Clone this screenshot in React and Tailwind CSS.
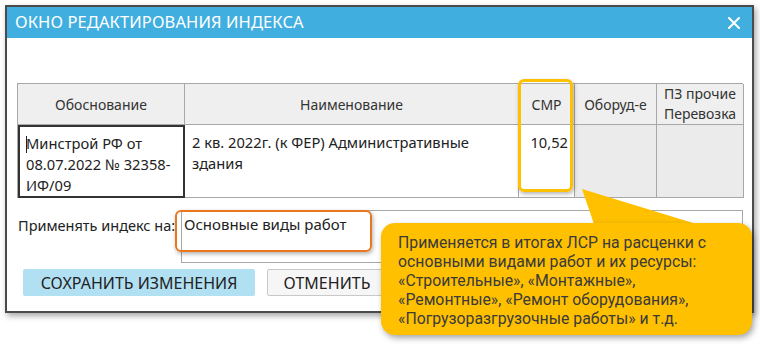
import React from 'react'

const cellFont = { fontFamily: '"Noto Sans", "Open Sans", sans-serif' }

function HeaderCell({ children, className = '' }) {
    return (
        <div className={`flex items-center justify-center border-r border-b border-[#a8a8a8] bg-[#efefef] text-center text-[14px] leading-[19px] text-[#333] ${className}`}>
            {children}
        </div>
    )
}

function App() {
    return (
        <div className="relative h-[348px] w-[760px] overflow-hidden bg-white" style={cellFont}>
            {/* dialog window */}
            <div className="ml-[5px] mt-[5px] flex h-[308px] w-[749px] flex-col border-2 border-[#4b4b4b] bg-white shadow-[2px_3px_6px_rgba(0,0,0,0.35)]">
                <div className="flex h-[31px] items-center justify-between bg-[#41aee0] pl-[8px] pr-[12px] text-white">
                    <span className="text-[16.5px] tracking-[0.1px]">ОКНО РЕДАКТИРОВАНИЯ ИНДЕКСА</span>
                    <svg width="12" height="12" viewBox="0 0 12 12" className="mt-[1px]">
                        <path d="M1 1L11 11M11 1L1 11" stroke="white" strokeWidth="2" strokeLinecap="round" />
                    </svg>
                </div>

                <div className="flex flex-col pl-[10px] pt-[45px]">
                    {/* table */}
                    <div className="grid w-[726px] grid-cols-[167px_334px_56px_82px_87px] grid-rows-[41px_73px] border-l border-t border-[#a8a8a8]">
                        <HeaderCell>Обоснование</HeaderCell>
                        <HeaderCell>Наименование</HeaderCell>
                        <HeaderCell>СМР</HeaderCell>
                        <HeaderCell>Оборуд-е</HeaderCell>
                        <HeaderCell className="leading-[20px]">
                            <span>ПЗ прочие<br />Перевозка</span>
                        </HeaderCell>

                        <div className="relative border-2 border-[#333] bg-white pl-[6px] pt-[6px] text-[14.7px] leading-[21px] text-[#222]">
                            <span className="absolute left-[6px] top-[9px] h-[17px] w-px bg-[#222]" />
                            Минстрой РФ от<br />08.07.2022 № 32358-<br />ИФ/09
                        </div>
                        <div className="border-r border-b border-[#a8a8a8] bg-white pl-[7px] pt-[7px] text-[14.7px] leading-[21px] text-[#222]">
                            2 кв. 2022г. (к ФЕР) Административные<br />здания
                        </div>
                        <div className="border-r border-b border-[#a8a8a8] bg-white pr-[6px] pt-[7px] text-right text-[14.7px] leading-[21px] text-[#222]">
                            10,52
                        </div>
                        <div className="border-r border-b border-[#a8a8a8] bg-[#ebebeb]" />
                        <div className="border-r border-b border-[#a8a8a8] bg-[#ebebeb]" />
                    </div>

                    {/* apply row */}
                    <div className="mt-[12px] flex items-start">
                        <span className="w-[164px] pl-[1px] pt-[6px] text-[14.5px] leading-[19px] text-[#222]">Применять индекс на:</span>
                        <div className="h-[53px] w-[562px] border border-[#a8a8a8] bg-white pl-[2px] pt-[3px] text-[15px] leading-[20px] text-[#222]">
                            Основные виды работ
                        </div>
                    </div>

                    {/* buttons */}
                    <div className="ml-[6px] mt-[6px] flex gap-[12px]">
                        <button className="h-[27px] w-[232px] rounded-[2px] bg-[#b2e0f3] text-[16px] text-[#222]">СОХРАНИТЬ ИЗМЕНЕНИЯ</button>
                        <button className="h-[27px] w-[120px] rounded-[2px] border border-[#c8c8c8] bg-[#f6f6f6] text-[16px] text-[#222]">ОТМЕНИТЬ</button>
                    </div>
                </div>
            </div>

            {/* highlight around СМР column */}
            <div className="absolute left-[518px] top-[79px] h-[113px] w-[55px] rounded-[6px] border-[3px] border-[#ffc000] shadow-[1px_2px_4px_rgba(0,0,0,0.3)]" />

            {/* highlight around input value */}
            <div className="absolute left-[175px] top-[210px] h-[42px] w-[197px] rounded-[6px] border-[2.5px] border-[#e8771f] shadow-[1px_2px_4px_rgba(0,0,0,0.3)]" />

            {/* callout */}
            <svg className="absolute left-0 top-0" width="760" height="348">
                <polygon points="582,189 596,230 716,230" fill="#ffc000" />
            </svg>
            <div
                className="absolute left-[381px] top-[223px] h-[112px] w-[371px] rounded-[14px] bg-[#ffc000] pl-[17px] pt-[10px] text-[15.8px] leading-[19px] text-[#3a3a3a] shadow-[2px_3px_6px_rgba(0,0,0,0.35)]"
                style={{ fontFamily: 'Roboto, "Noto Sans", sans-serif' }}
            >
                Применяется в итогах ЛСР на расценки с<br />
                основными видами работ и их ресурсы:<br />
                «Строительные», «Монтажные»,<br />
                «Ремонтные», «Ремонт оборудования»,<br />
                «Погрузоразгрузочные работы» и т.д.
            </div>
        </div>
    )
}

export default App
